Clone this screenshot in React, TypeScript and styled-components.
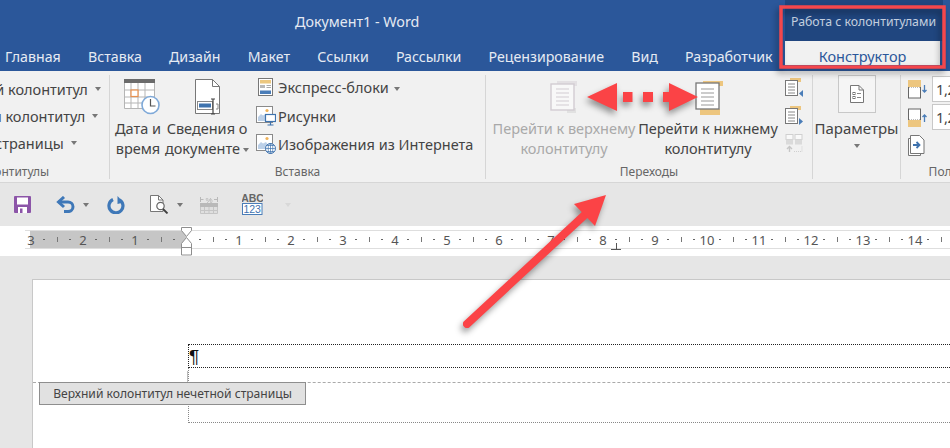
import React, { FC } from 'react'
import { createGlobalStyle, styled } from 'styled-components'

const Global = createGlobalStyle`
  html, body {
    margin: 0;
    padding: 0;
    background: #e6e6e6;
    font-family: "Noto Sans", "Open Sans", sans-serif;
  }
`

const Screen = styled.div`
  position: relative;
  width: 950px;
  height: 448px;
  overflow: hidden;
  display: flex;
  flex-direction: column;
`

const TitleBar = styled.header`
  height: 43px;
  flex: none;
  background: #2b579a;
  display: flex;
`

const DocTitle = styled.div`
  margin-left: 295px;
  line-height: 43px;
  font-size: 14.3px;
  color: #e4e9f2;
`

const ContextLabel = styled.div`
  margin-left: auto;
  margin-right: 7px;
  width: 158px;
  height: 41px;
  background: #20467f;
  color: #c3cede;
  font-size: 12.3px;
  line-height: 44px;
  padding-left: 6px;
  box-sizing: border-box;
  white-space: nowrap;
`

const TabBar = styled.nav`
  height: 28px;
  flex: none;
  background: #2b579a;
  display: flex;
  gap: 27.2px;
  padding-left: 5px;
  position: relative;
`

const Tab = styled.span`
  font-size: 14.2px;
  line-height: 27px;
  color: #e6ebf3;
  white-space: nowrap;
`

const ActiveTab = styled.span`
  position: absolute;
  left: 785px;
  top: -2px;
  width: 155px;
  height: 24px;
  background: #f1f1f1;
  color: #2b579a;
  font-size: 14.5px;
  line-height: 30px;
  text-align: center;
`

const Ribbon = styled.section`
  height: 112px;
  flex: none;
  display: flex;
  background: #f1f1f1;
  border-bottom: 1px solid #d6d6d6;
  box-sizing: border-box;
  overflow: hidden;
`

const Group = styled.div<{ $w: number; $shift?: number }>`
  flex: none;
  width: ${p => p.$w}px;
  margin-left: ${p => p.$shift ?? 0}px;
  margin-top: 4px;
  margin-bottom: 3px;
  display: flex;
  flex-direction: column;
  border-right: 1px solid #d6d6d6;
  box-sizing: content-box;
`

const GroupBody = styled.div<{ $pad?: number }>`
  flex: 1;
  display: flex;
  padding-left: ${p => p.$pad ?? 0}px;
  min-height: 0;
`

const GroupLabel = styled.div`
  height: 16px;
  font-size: 12px;
  line-height: 17px;
  text-align: center;
  color: #666;
  white-space: nowrap;
`

const LargeButton = styled.div<{ $w: number; $ml?: number; $off?: boolean }>`
  flex: none;
  width: ${p => p.$w}px;
  margin-left: ${p => p.$ml ?? 0}px;
  display: flex;
  flex-direction: column;
  align-items: center;
  font-size: 14.5px;
  line-height: 20px;
  text-align: center;
  white-space: nowrap;
  color: ${p => (p.$off ? '#a9a9a9' : '#444')};
`

const IconSlot = styled.div<{ $dx?: number }>`
  height: 43px;
  box-sizing: border-box;
  display: flex;
  align-items: flex-end;
  justify-content: center;
  padding-bottom: 3px;
  margin-left: ${p => p.$dx ?? 0}px;
`

const SmallList = styled.div<{ $ml?: number; $mt?: number; $w?: number }>`
  display: flex;
  flex-direction: column;
  margin-left: ${p => p.$ml ?? 0}px;
  margin-top: ${p => p.$mt ?? 0}px;
  width: ${p => (p.$w ? `${p.$w}px` : 'auto')};
`

const SmallRow = styled.div<{ $h?: number }>`
  height: ${p => p.$h ?? 28}px;
  display: flex;
  align-items: center;
  gap: 2px;
  font-size: 14.5px;
  color: #444;
  white-space: nowrap;
`

const SmallIcon = styled.span`
  flex: none;
  width: 20px;
  display: flex;
  justify-content: center;
`

const Caret = styled.i<{ $ml?: number; $mt?: number; $c?: string }>`
  display: inline-block;
  margin-left: ${p => p.$ml ?? 5}px;
  margin-top: ${p => p.$mt ?? 0}px;
  border-left: 3.5px solid transparent;
  border-right: 3.5px solid transparent;
  border-top: 4px solid ${p => p.$c ?? '#777'};
  vertical-align: middle;
`

const OptionsBox = styled.div`
  width: 38px;
  height: 38px;
  box-sizing: border-box;
  background: #f5f5f5;
  border: 1px solid #c8c8c8;
  display: flex;
  align-items: center;
  justify-content: center;
  margin-bottom: 5px;
`

const OptionsLabel = styled.span`
  font-size: 15px;
`

const MarginRow = styled.div`
  height: 28px;
  display: flex;
  align-items: center;
  padding-left: 7px;
`

const MarginInput = styled.div`
  width: 90px;
  height: 26px;
  margin-left: 5px;
  box-sizing: border-box;
  background: #fff;
  border: 1px solid #c8c8c8;
  font-size: 14.5px;
  letter-spacing: -0.4px;
  line-height: 24px;
  padding-left: 3px;
  color: #444;
`

const QuickBar = styled.div`
  height: 43px;
  flex: none;
  display: flex;
  align-items: center;
  background: #e6e6e6;
`

const QuickItem = styled.span<{ $ml: number }>`
  display: flex;
  margin-left: ${p => p.$ml}px;
`

const RulerBand = styled.div`
  position: relative;
  height: 30px;
  flex: none;
  background: #fff;
  padding-top: 4px;
  box-sizing: border-box;
  overflow: hidden;
`

const RulerTrack = styled.div`
  margin-left: 24.5px;
  height: 17px;
  display: flex;
  border-top: 1px solid #dedede;
  border-bottom: 1px solid #dedede;
  background: linear-gradient(to right, #fff 5.5px, #c6c6c6 5.5px, #c6c6c6 161.5px, #fff 161.5px);
`

const RulerSlot = styled.span`
  flex: none;
  width: 13px;
  display: flex;
  align-items: center;
  justify-content: center;
  font-size: 13px;
  color: #555;
  white-space: nowrap;
`

const RulerDot = styled.i`
  width: 1.5px;
  height: 1.5px;
  background: #666;
`

const RulerTick = styled.i`
  width: 1px;
  height: 5px;
  background: #777;
`

const IndentMarker = styled.svg`
  position: absolute;
  left: 180px;
  top: 1px;
`

const TabStop = styled.i`
  position: absolute;
  left: 611px;
  top: 17px;
  width: 10px;
  height: 6px;
  border-bottom: 1.5px solid #555;
  &::after {
    content: '';
    position: absolute;
    left: 4.5px;
    top: 0;
    height: 6px;
    width: 1px;
    background: #555;
  }
`

const Canvas = styled.main`
  flex: 1;
  background: #e6e6e6;
  padding: 23px 0 0 32px;
  overflow: hidden;
`

const Sheet = styled.div`
  position: relative;
  height: 300px;
  background: #fff;
  border-top: 1px solid #c8c8c8;
  border-left: 1px solid #c8c8c8;
  padding: 64px 0 0 155px;
`

const HeaderField = styled.div`
  width: 1000px;
  height: 24px;
  box-sizing: border-box;
  border: 1px dotted #222;
  font-family: "Liberation Sans", sans-serif;
  font-size: 19px;
  line-height: 24px;
  padding-left: 0;
  color: #111;
`

const HeaderRest = styled.div`
  width: 1000px;
  height: 55px;
  box-sizing: border-box;
  border-left: 1px dotted #888;
  border-bottom: 1px dotted #888;
`

const BoundaryLine = styled.i`
  position: absolute;
  left: 0;
  right: 0;
  top: 102px;
  border-top: 1px dashed #aaa;
`

const TagStem = styled.i`
  position: absolute;
  left: 122px;
  top: 91px;
  width: 32px;
  height: 11px;
  border-right: 1px solid #bbb;
  border-bottom: 1px solid #aaa;
`

const HeaderTag = styled.div`
  position: absolute;
  left: 6px;
  top: 102px;
  width: 267px;
  height: 23px;
  box-sizing: border-box;
  background: #e1e1e1;
  border: 1px solid #8e8e8e;
  font-size: 12.1px;
  line-height: 21px;
  text-align: center;
  color: #444;
  white-space: nowrap;
`

const Annotation = styled.svg`
  position: absolute;
  left: 0;
  top: 0;
  pointer-events: none;
  filter: drop-shadow(-2px 4px 3px rgba(0, 0, 0, 0.4));
`

const CalendarIcon: FC = () => (
  <svg width="37" height="36" viewBox="0 0 37 36">
    <rect x="1" y="0" width="31" height="4" fill="#6b6b6b" />
    <path d="M1.5 4v25.5h30V4M1.5 11h30M1.5 18h30M1.5 24h30M8 4v25M15 4v25M22 4v25" fill="#fff" stroke="#b5b5b5" />
    <rect x="8" y="11" width="7" height="6.5" fill="#fff" stroke="#e8914f" strokeWidth="1.2" />
    <circle cx="27.500" cy="26" r="8.500" fill="#fff" stroke="#7fa9d8" strokeWidth="1.6" />
    <path d="M27.500 20v7h5" fill="none" stroke="#555" strokeWidth="1.2" />
  </svg>
)

const DocInfoIcon: FC = () => (
  <svg width="27" height="36" viewBox="0 0 27 36">
    <path d="M1.500 0.500h17l7 7v27h-24z" fill="#fff" stroke="#777" />
    <path d="M18.500 0.500v7h7" fill="none" stroke="#777" />
    <rect x="3.500" y="22.500" width="15" height="8" fill="#fff" stroke="#888" />
    <rect x="5" y="24.500" width="12" height="4" fill="#3f73ae" />
    <path d="M17 20h4M19 20v15M17 35h4" stroke="#444" strokeWidth="1.2" fill="none" />
    <path d="M22 25h2v5h-2" stroke="#888" fill="none" />
  </svg>
)

const ExpressIcon: FC = () => (
  <svg width="16" height="19" viewBox="0 0 16 19">
    <rect x="0.5" y="0.5" width="14" height="17" fill="#fff" stroke="#777" />
    <rect x="2" y="2" width="11" height="3.5" fill="#ecc77f" />
    <rect x="2" y="7" width="5" height="3" fill="#b8b8b8" />
    <path d="M8.5 7.5h4.5M8.5 9.5h4.5" stroke="#aaa" />
    <rect x="2" y="12.5" width="11" height="3.5" fill="#4a7db8" />
  </svg>
)

const PictureBase: FC = () => (
  <>
    <rect x="0.5" y="0.5" width="16" height="16" fill="#fff" stroke="#8a8a8a" />
    <circle cx="11" cy="4.5" r="1.6" fill="#f0b35a" />
    <path d="M2 15v-4l3-3 2 1.5 3-1.5 2 3v4z" fill="#bcd0e8" />
  </>
)

const PicturesIcon: FC = () => (
  <svg width="20" height="20" viewBox="0 0 20 20">
    <PictureBase />
    <rect x="9.5" y="8.5" width="10" height="7" fill="#fff" stroke="#3f73ae" strokeWidth="1.2" />
    <path d="M14.5 15.5v3M11.5 19h6" stroke="#3f73ae" strokeWidth="1.2" />
  </svg>
)

const OnlineIcon: FC = () => (
  <svg width="20" height="20" viewBox="0 0 20 20">
    <PictureBase />
    <circle cx="14.5" cy="14.5" r="5" fill="#fff" stroke="#3f73ae" />
    <path d="M9.5 14.5h10M14.5 9.5v10M11 11.5h7M11 17.5h7" stroke="#3f73ae" strokeWidth="0.7" />
    <ellipse cx="14.5" cy="14.5" rx="2.3" ry="5" fill="none" stroke="#3f73ae" strokeWidth="0.7" />
  </svg>
)

const pageLines = 'M6 7h13M6 11h13M6 15h13M6 19h13M6 23h13'

const PrevHeaderIcon: FC = () => (
  <svg width="28" height="34" viewBox="0 0 28 34" opacity="0.55">
    <rect x="7" y="0" width="20" height="5" fill="#d9d3d8" />
    <rect x="17" y="27" width="9" height="5" fill="#d4d4d4" />
    <rect x="1" y="3" width="23" height="26" fill="#fff" stroke="#b9aeb9" strokeWidth="1.4" />
    <path d={pageLines} stroke="#b9aeb9" transform="translate(0 1)" />
  </svg>
)

const NextFooterIcon: FC = () => (
  <svg width="30" height="34" viewBox="0 0 30 34">
    <rect x="8" y="0" width="20" height="5" fill="#edc67f" />
    <rect x="5" y="28" width="20" height="6" fill="#edc67f" />
    <rect x="1" y="2" width="23" height="26" fill="#fff" stroke="#777" strokeWidth="1.3" />
    <path d={pageLines} stroke="#999" transform="translate(0 1)" />
  </svg>
)

const SectionIcon: FC<{ $next?: boolean }> = ({ $next }) => (
  <svg width="18" height="20" viewBox="0 0 18 20">
    <rect x="5" y="0" width="11" height="4" fill="#edc67f" />
    <rect x="0.5" y="2.5" width="12" height="15" fill="#fff" stroke="#777" />
    <path d="M3 6h7M3 9h7M3 12h7M3 15h7" stroke="#888" />
    <path d={$next ? 'M14 12l4 3.5-4 3.5z' : 'M18 12l-4 3.5 4 3.5z'} fill="#4a7db8" />
  </svg>
)

const LinkIcon: FC = () => (
  <svg width="18" height="20" viewBox="0 0 18 20" opacity="0.6">
    <rect x="1" y="0.5" width="7" height="5" fill="#fff" stroke="#bbb" />
    <rect x="10" y="0.5" width="7" height="5" fill="#fff" stroke="#bbb" />
    <rect x="1" y="5.5" width="7" height="5" fill="#ccc" />
    <rect x="10" y="5.5" width="7" height="5" fill="#ccc" />
    <path d="M4.5 18v-5M2 15l2.5-2.5L7 15" stroke="#aaa" fill="none" strokeWidth="1.4" />
    <path d="M9 17.5h8v-5" stroke="#bbb" strokeDasharray="1 1" fill="none" />
  </svg>
)

const OptionsIcon: FC = () => (
  <svg width="14" height="18" viewBox="0 0 14 18">
    <path d="M0.5 0.5h8.5l4.5 4.5v12.5h-13z" fill="#fff" stroke="#777" />
    <path d="M9 0.5v4.5h4.5" fill="none" stroke="#777" />
    <rect x="3" y="7.5" width="2" height="2" fill="none" stroke="#777" />
    <rect x="3" y="11.5" width="2" height="2" fill="none" stroke="#777" />
    <path d="M7 8.5h4M7 12.5h4" stroke="#888" />
  </svg>
)

const MarginIcon: FC<{ $bottom?: boolean }> = ({ $bottom }) => (
  <svg width="19" height="19" viewBox="0 0 19 19">
    <rect x="0.5" y="1" width="12" height="17" fill="#fff" stroke="#666" />
    <rect x="0" y={$bottom ? 12 : 0} width="13" height="7" fill="#edc67f" />
    <path d={$bottom ? 'M1 11.5h11' : 'M1 7.5h11'} stroke="#bbb" strokeDasharray="1 1" />
    <path d={$bottom ? 'M16.5 14V7M14.5 9l2-2 2 2' : 'M16.5 5v7M14.5 10l2 2 2-2'} stroke="#4a7db8" fill="none" strokeWidth="1.3" />
  </svg>
)

const PageArrowIcon: FC = () => (
  <svg width="17" height="21" viewBox="0 0 17 21">
    <path d="M2.5 3.5h-2v17h12v-2" fill="#fff" stroke="#777" />
    <path d="M2.5 0.5h9l4.5 4.5v13.5h-13.500z" fill="#fff" stroke="#777" />
    <path d="M5 10h6M8.500 7l3 3-3 3" stroke="#3f73ae" fill="none" strokeWidth="1.8" />
  </svg>
)

const SaveIcon: FC = () => (
  <svg width="17" height="17" viewBox="0 0 17 17">
    <path d="M0 1a1 1 0 0 1 1-1h15a1 1 0 0 1 1 1v15a1 1 0 0 1-1 1H1a1 1 0 0 1-1-1z" fill="#8c55a8" />
    <rect x="3" y="1.500" width="11" height="7" fill="#fff" />
    <rect x="4" y="11" width="9" height="6" fill="#fff" />
    <rect x="6" y="12.500" width="2.500" height="4.500" fill="#8c55a8" />
  </svg>
)

const UndoIcon: FC = () => (
  <svg width="19" height="17" viewBox="0 0 19 17">
    <path d="M2.500 6h9.500a5 4.800 0 0 1 0 9.600H8" fill="none" stroke="#3f78b8" strokeWidth="3" />
    <path d="M8 1L2.500 6 8 11" fill="none" stroke="#3f78b8" strokeWidth="3" />
  </svg>
)

const RedoIcon: FC = () => (
  <svg width="18" height="18" viewBox="0 0 18 18">
    <path d="M6 3.500A7 7 0 1 0 12.500 3.800" fill="none" stroke="#3f78b8" strokeWidth="3.200" />
    <path d="M10.500 0v8l6-1.500z" fill="#3f78b8" />
  </svg>
)

const PreviewIcon: FC = () => (
  <svg width="19" height="19" viewBox="0 0 19 19">
    <path d="M0.500 0.500h8l4.500 4.500v11.500h-12.500z" fill="#fff" stroke="#777" />
    <path d="M8.500 0.500v4.500h4.500" fill="none" stroke="#777" />
    <circle cx="10.500" cy="11" r="3.700" fill="#fff" stroke="#666" strokeWidth="1.200" />
    <path d="M13 14l4.500 4.500" stroke="#3f3f3f" strokeWidth="1.800" />
  </svg>
)

const TableIcon: FC = () => (
  <svg width="18" height="18" viewBox="0 0 18 18" opacity="0.75">
    <path d="M0.500 1v5M0.500 3.500h3M17.500 1v5M14 3.500h3.500" stroke="#aaa" />
    <text x="9" y="6.500" fontSize="8" textAnchor="middle" fill="#999" fontFamily="Liberation Sans">%</text>
    <rect x="0" y="7" width="18" height="4" fill="#aaa" />
    <path d="M0.500 11v6.500h17V11M0 14.500h18M4.500 11v6M9 11v6M13.500 11v6" stroke="#bbb" fill="#ddd" />
  </svg>
)

const SpellIcon: FC = () => (
  <svg width="21" height="21" viewBox="0 0 21 21">
    <text x="10.500" y="8" fontSize="10.500" fontWeight="700" textAnchor="middle" fill="#666" fontFamily="Liberation Sans">ABC</text>
    <rect x="0.500" y="9.500" width="19.500" height="11" fill="#fff" stroke="#4a7db8" />
    <text x="10.200" y="18.500" fontSize="10.500" textAnchor="middle" fill="#3f73ae" fontFamily="Liberation Sans">123</text>
  </svg>
)

const rulerLabels = ['3', '2', '1', '', ...Array.from({ length: 15 }, (_, i) => String(i + 1))]

const Ruler: FC = () => (
  <RulerBand>
    <RulerTrack>
      {rulerLabels.map(label => (
        <React.Fragment key={label || 'zero'}>
          <RulerSlot>{label}</RulerSlot>
          <RulerSlot><RulerDot /></RulerSlot>
          <RulerSlot><RulerTick /></RulerSlot>
          <RulerSlot><RulerDot /></RulerSlot>
        </React.Fragment>
      ))}
    </RulerTrack>
    <IndentMarker width="13" height="29" viewBox="0 0 13 29">
      <path d="M1.500 0.500h10v3l-5 6-5-6z" fill="#fff" stroke="#8e8e8e" />
      <path d="M6.500 10.500l5 6v11.500h-10v-11.500z" fill="#fff" stroke="#8e8e8e" />
      <path d="M1.500 20.500h10" stroke="#8e8e8e" />
    </IndentMarker>
    <TabStop />
  </RulerBand>
)

const App: FC = () => (
  <Screen>
    <Global />
    <TitleBar>
      <DocTitle>Документ1 - Word</DocTitle>
      <ContextLabel>Работа с колонтитулами</ContextLabel>
    </TitleBar>
    <TabBar>
      {['Главная', 'Вставка', 'Дизайн', 'Макет', 'Ссылки', 'Рассылки', 'Рецензирование', 'Вид', 'Разработчик'].map(name => (
        <Tab key={name}>{name}</Tab>
      ))}
      <ActiveTab>Конструктор</ActiveTab>
    </TabBar>

    <Ribbon>
      <Group $w={196} $shift={-87}>
        <GroupBody $pad={31}>
          <SmallList>
            <SmallRow $h={27}>Верхний колонтитул<Caret /></SmallRow>
            <SmallRow $h={27}>Нижний колонтитул<Caret /></SmallRow>
            <SmallRow $h={27}>Номер страницы<Caret /></SmallRow>
          </SmallList>
        </GroupBody>
        <GroupLabel>Колонтитулы</GroupLabel>
      </Group>

      <Group $w={375}>
        <GroupBody $pad={3}>
          <LargeButton $w={50}>
            <IconSlot $dx={6}><CalendarIcon /></IconSlot>
            Дата и<br />время
          </LargeButton>
          <LargeButton $w={84} $ml={2}>
            <IconSlot><DocInfoIcon /></IconSlot>
            Сведения о<br /><span>документе<Caret $ml={3} /></span>
          </LargeButton>
          <SmallList $ml={7} $mt={-2}>
            <SmallRow><SmallIcon><ExpressIcon /></SmallIcon><span>Экспресс-блоки<Caret /></span></SmallRow>
            <SmallRow $h={29}><SmallIcon><PicturesIcon /></SmallIcon>Рисунки</SmallRow>
            <SmallRow><SmallIcon><OnlineIcon /></SmallIcon>Изображения из Интернета</SmallRow>
          </SmallList>
        </GroupBody>
        <GroupLabel>Вставка</GroupLabel>
      </Group>

      <Group $w={326}>
        <GroupBody $pad={5}>
          <LargeButton $w={146} $off>
            <IconSlot><PrevHeaderIcon /></IconSlot>
            Перейти к верхнему<br />колонтитулу
          </LargeButton>
          <LargeButton $w={142}>
            <IconSlot $dx={3}><NextFooterIcon /></IconSlot>
            Перейти к нижнему<br />колонтитулу
          </LargeButton>
          <SmallList $ml={6} $mt={-1} $w={20}>
            <SmallRow><SectionIcon /></SmallRow>
            <SmallRow><SectionIcon $next /></SmallRow>
            <SmallRow><LinkIcon /></SmallRow>
          </SmallList>
        </GroupBody>
        <GroupLabel>Переходы</GroupLabel>
      </Group>

      <Group $w={87}>
        <GroupBody>
          <LargeButton $w={87}>
            <OptionsBox><OptionsIcon /></OptionsBox>
            <OptionsLabel>Параметры</OptionsLabel>
            <Caret $ml={0} $mt={6} />
          </LargeButton>
        </GroupBody>
      </Group>

      <Group $w={122}>
        <GroupBody>
          <SmallList>
            <MarginRow><MarginIcon /><MarginInput>1,25 см</MarginInput></MarginRow>
            <MarginRow><MarginIcon $bottom /><MarginInput>1,25 см</MarginInput></MarginRow>
            <MarginRow><PageArrowIcon /></MarginRow>
          </SmallList>
        </GroupBody>
        <GroupLabel>Положение</GroupLabel>
      </Group>
    </Ribbon>

    <QuickBar>
      <QuickItem $ml={14}><SaveIcon /></QuickItem>
      <QuickItem $ml={25}><UndoIcon /></QuickItem>
      <QuickItem $ml={8}><Caret $ml={0} /></QuickItem>
      <QuickItem $ml={18}><RedoIcon /></QuickItem>
      <QuickItem $ml={25}><PreviewIcon /></QuickItem>
      <QuickItem $ml={8}><Caret $ml={0} /></QuickItem>
      <QuickItem $ml={17}><TableIcon /></QuickItem>
      <QuickItem $ml={24}><SpellIcon /></QuickItem>
      <QuickItem $ml={22}><Caret $ml={0} $c="#d8d8d8" /></QuickItem>
    </QuickBar>

    <Ruler />

    <Canvas>
      <Sheet>
        <HeaderField>¶</HeaderField>
        <HeaderRest />
        <BoundaryLine />
        <TagStem />
        <HeaderTag>Верхний колонтитул нечетной страницы</HeaderTag>
      </Sheet>
    </Canvas>

    <Annotation width="950" height="448" viewBox="0 0 950 448">
      <rect x="781" y="7" width="163" height="60" fill="none" stroke="#f4474c" strokeWidth="3.500" />
      <path d="M587 97l30-14v28zM623 92h9.500v10H623zM643 92h10v10h-10zM663 92h6v-9l29 14-29 14v-9h-6z" fill="#fb4346" />
      <path d="M467 324L590 210" stroke="#fb4346" strokeWidth="8" strokeLinecap="round" />
      <path d="M606 195l-32 9 21 22z" fill="#fb4346" />
    </Annotation>
  </Screen>
)

export default App
